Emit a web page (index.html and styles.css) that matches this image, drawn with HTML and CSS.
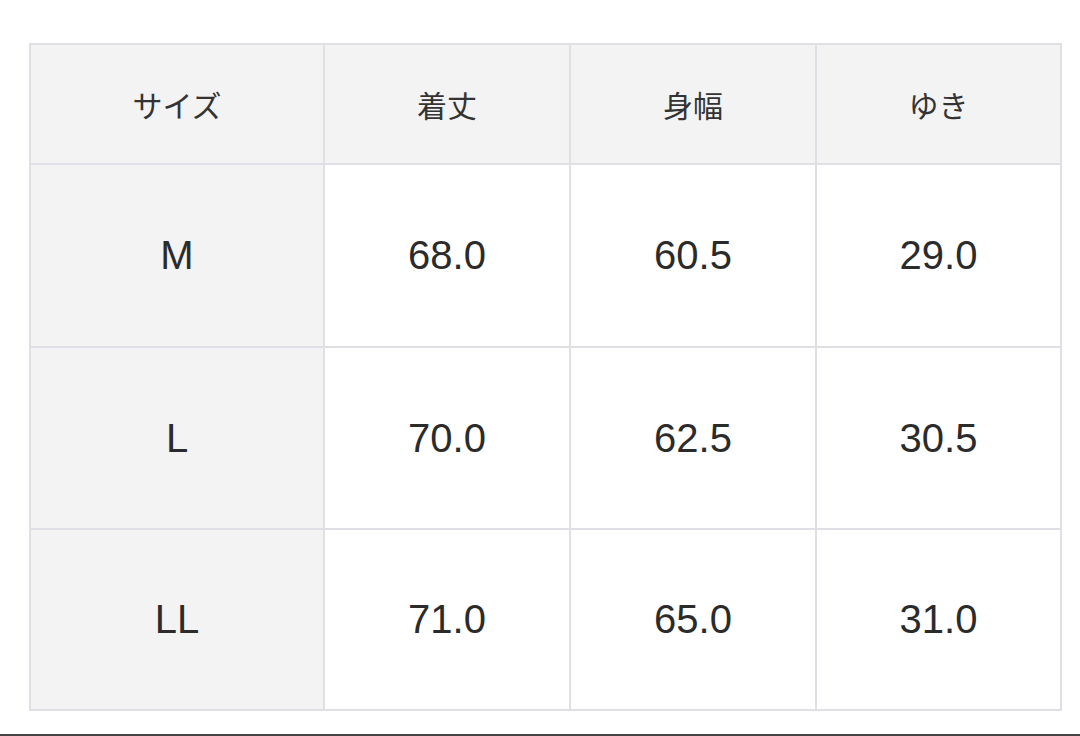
FILE: index.html
```html
<!DOCTYPE html>
<html lang="ja">
<head>
<meta charset="utf-8">
<link rel="stylesheet" href="styles.css">
</head>
<body>
<div class="page">
  <table class="size-table">
    <colgroup>
      <col class="c1"><col class="c2"><col class="c3"><col class="c4">
    </colgroup>
    <tr class="head">
      <th class="jp">サイズ</th>
      <th class="jp">着丈</th>
      <th class="jp">身幅</th>
      <th class="jp">ゆき</th>
    </tr>
    <tr class="r1">
      <th class="num">M</th><td class="num">68.0</td><td class="num">60.5</td><td class="num">29.0</td>
    </tr>
    <tr class="r2">
      <th class="num">L</th><td class="num">70.0</td><td class="num">62.5</td><td class="num">30.5</td>
    </tr>
    <tr class="r3">
      <th class="num">LL</th><td class="num">71.0</td><td class="num">65.0</td><td class="num">31.0</td>
    </tr>
  </table>
</div>
<div class="bottom-line"></div>
</body>
</html>
```
FILE: styles.css
```css
html, body {
  margin: 0;
  padding: 0;
  background: #ffffff;
}
body {
  width: 1080px;
  height: 736px;
  display: flex;
  flex-direction: column;
  overflow: hidden;
}
.page {
  flex: 1;
  padding: 43px 0 0 29px;
}
.size-table {
  table-layout: fixed;
  width: 1033px;
  border-collapse: separate;
  border-spacing: 2px;
  background: #dfe0e6;
  color: #2b2b2b;
}
.c1 { width: 292px; }
.c2 { width: 244px; }
.c3 { width: 244px; }
.c4 { width: 243px; }
th, td {
  padding: 0;
  text-align: center;
  vertical-align: middle;
  font-weight: normal;
  background: #ffffff;
}
th {
  background: #f3f3f4;
}
.head { height: 118px; }
.r1 { height: 181px; }
.r2 { height: 180px; }
.r3 { height: 179px; }
.jp {
  font-family: "Noto Sans CJK JP", "Noto Sans", sans-serif;
  font-size: 30px;
  color: #333333;
}
.num {
  font-family: "Liberation Sans", Arial, sans-serif;
  font-size: 40px;
}
.bottom-line {
  height: 2px;
  background: #444444;
}
```
